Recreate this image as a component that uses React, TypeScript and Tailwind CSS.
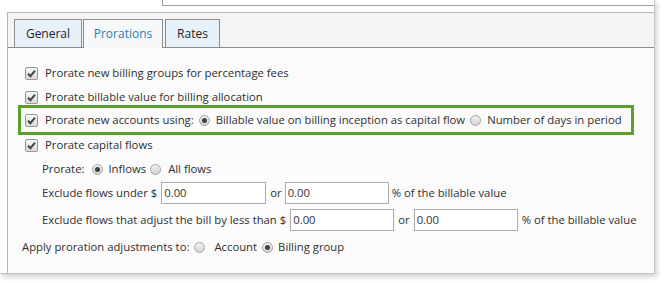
const font = "font-['Open_Sans','Noto_Sans',sans-serif]";

function Check() {
  return (
    <span className="w-[13px] h-[13px] shrink-0 rounded-[2px] border border-[#979797] bg-gradient-to-b from-[#f6f6f6] to-[#dadada] flex items-center justify-center">
      <svg width="9" height="9" viewBox="0 0 9 9">
        <path d="M1 4.8 L3.4 7.2 L8 1.6" fill="none" stroke="#444" strokeWidth="2" />
      </svg>
    </span>
  );
}

function Radio({ on }: { on?: boolean }) {
  return (
    <span className="w-[11px] h-[11px] shrink-0 rounded-full border border-[#a3a3a3] bg-gradient-to-b from-[#f2f2f2] to-[#d4d4d4] flex items-center justify-center">
      {on && <span className="w-[5px] h-[5px] rounded-full bg-[#3f3f3f]" />}
    </span>
  );
}

function Field({ w = 'w-[105px]' }: { w?: string }) {
  return (
    <span className={`${w} h-[22px] shrink-0 border border-[#ababab] bg-white px-[2px] flex items-center text-[#333]`}>
      0.00
    </span>
  );
}

function Tab({ label, active, className }: { label: string; active?: boolean; className: string }) {
  return (
    <div
      className={
        active
          ? `${className} h-[29px] -mb-px border border-b-0 border-[#8c8c8c] bg-[#f6f8f9] text-[#2e7db8] flex items-center justify-center`
          : `${className} h-[28px] border border-b-0 border-[#8c8c8c] bg-[#e6f1fa] text-[#1e1e1e] flex items-center justify-center`
      }
    >
      {label}
    </div>
  );
}

export default function App() {
  return (
    <div className={`w-[665px] h-[283px] bg-white overflow-hidden text-[11.3px] leading-[16px] text-[#2f2f2f] whitespace-nowrap ${font}`}>
      <div className="w-[655px] h-[274px] border-r border-b border-[#c4c4c4] shadow-[2px_3px_5px_rgba(0,0,0,0.18)] flex flex-col">
        <div className="h-[6px] ml-[162px] border-l border-b border-[#a0a0a0] shrink-0" />
        <div className="mt-[6px] ml-[7px] flex-1 border-l border-t border-[#b4b4b4] flex flex-col bg-[#fbfbfb]">
          <div className="h-[35px] shrink-0 bg-[#f4f4f4] border-b border-[#8c8c8c] flex items-end pl-[6px] text-[12px]">
            <Tab label="General" className="w-[68px]" />
            <Tab label="Prorations" active className="w-[80px] ml-[1px]" />
            <Tab label="Rates" className="w-[55px] ml-[2px]" />
          </div>

          <div className="flex flex-col pt-[17px]">
            <div className="h-[16px] flex items-center gap-[7px] pl-[17px]">
              <Check />
              <span>Prorate new billing groups for percentage fees</span>
            </div>
            <div className="h-[16px] mt-[8px] flex items-center gap-[7px] pl-[17px]">
              <Check />
              <span>Prorate billable value for billing allocation</span>
            </div>

            <div className="w-[616px] h-[30px] ml-[10px] border-[3px] border-[#5c9f2c] flex items-center pl-[4px]">
              <Check />
              <span className="ml-[7px]">Prorate new accounts using:</span>
              <span className="ml-[5px]"><Radio on /></span>
              <span className="ml-[6px]">Billable value on billing inception as capital flow</span>
              <span className="ml-[5px]"><Radio /></span>
              <span className="ml-[6px]">Number of days in period</span>
            </div>

            <div className="h-[16px] mt-[2px] flex items-center gap-[7px] pl-[17px]">
              <Check />
              <span>Prorate capital flows</span>
            </div>

            <div className="h-[16px] mt-[8px] flex items-center pl-[34px]">
              <span>Prorate:</span>
              <span className="ml-[8px]"><Radio on /></span>
              <span className="ml-[5px]">Inflows</span>
              <span className="ml-[4px]"><Radio /></span>
              <span className="ml-[7px]">All flows</span>
            </div>

            <div className="h-[22px] mt-[5px] flex items-center pl-[34px]">
              <span>Exclude flows under $</span>
              <span className="ml-[4px]"><Field /></span>
              <span className="ml-[4px]">or</span>
              <span className="ml-[3px]"><Field w="w-[104px]" /></span>
              <span className="ml-[3px]">% of the billable value</span>
            </div>

            <div className="h-[22px] mt-[5px] flex items-center pl-[34px]">
              <span>Exclude flows that adjust the bill by less than $</span>
              <span className="ml-[4px]"><Field w="w-[104px]" /></span>
              <span className="ml-[4px]">or</span>
              <span className="ml-[4px]"><Field w="w-[104px]" /></span>
              <span className="ml-[4px]">% of the billable value</span>
            </div>

            <div className="h-[16px] mt-[8px] flex items-center pl-[14px]">
              <span>Apply proration adjustments to:</span>
              <span className="ml-[5px]"><Radio /></span>
              <span className="ml-[9px]">Account</span>
              <span className="ml-[5px]"><Radio on /></span>
              <span className="ml-[5px]">Billing group</span>
            </div>
          </div>
        </div>
      </div>
    </div>
  );
}
